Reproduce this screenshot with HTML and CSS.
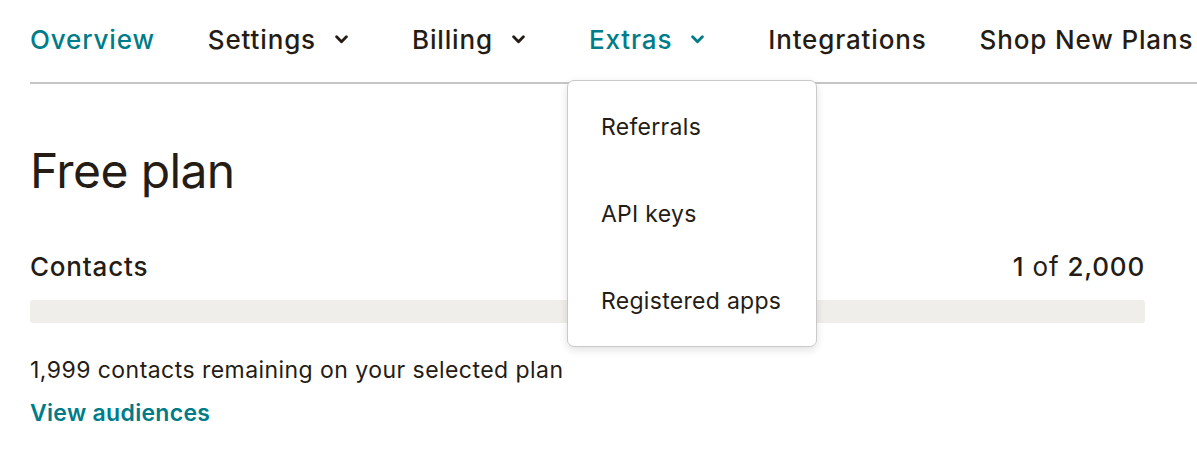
FILE: index.html
```html
<!DOCTYPE html>
<html>
<head>
<meta charset="utf-8">
<link rel="stylesheet" href="styles.css">
</head>
<body>
<div class="page">
  <nav class="tabs">
    <a class="tab active">Overview</a>
    <a class="tab">Settings <svg class="chev" viewBox="0 0 12 8"><path d="M1.5 1.5 L6 6 L10.5 1.5" /></svg></a>
    <a class="tab">Billing <svg class="chev" viewBox="0 0 12 8"><path d="M1.5 1.5 L6 6 L10.5 1.5" /></svg></a>
    <div class="tab-wrap">
      <a class="tab active">Extras <svg class="chev" viewBox="0 0 12 8"><path d="M1.5 1.5 L6 6 L10.5 1.5" /></svg></a>
      <div class="menu">
        <a class="menu-item">Referrals</a>
        <a class="menu-item">API keys</a>
        <a class="menu-item">Registered apps</a>
      </div>
    </div>
    <a class="tab">Integrations</a>
    <a class="tab">Shop New Plans</a>
  </nav>
  <main class="content">
    <h1 class="title">Free plan</h1>
    <div class="row">
      <span class="label">Contacts</span>
      <span class="count"><b>1</b> of <b>2,000</b></span>
    </div>
    <div class="bar"></div>
    <p class="remaining">1,999 contacts remaining on your selected plan</p>
    <a class="link">View audiences</a>
  </main>
</div>
</body>
</html>
```

FILE: styles.css
```css
* { box-sizing: border-box; }
html, body { margin: 0; padding: 0; background: #fff; }
body {
  font-family: "Inter", "Liberation Sans", sans-serif;
  color: #241c15;
}
.page { padding-left: 30px; }
.tabs {
  display: flex;
  align-items: center;
  gap: 53px;
  height: 84px;
  padding-bottom: 3px;
  border-bottom: 2px solid #c6c6c6;
  white-space: nowrap;
}
.tab {
  display: flex;
  align-items: center;
  font-size: 26px;
  font-weight: 500;
  color: #241c15;
  letter-spacing: 0.85px;
}
.tab.active { color: #007c89; }
.chev {
  width: 13px;
  height: 9px;
  margin-left: 19px;
  margin-right: 11px;
  fill: none;
  stroke: currentColor;
  stroke-width: 2.6;
  stroke-linecap: round;
  stroke-linejoin: round;
}
.tab-wrap {
  position: relative;
  align-self: stretch;
  display: flex;
  align-items: center;
}
.menu {
  position: absolute;
  left: -22px;
  top: 80px;
  width: 250px;
  height: 267px;
  background: #fff;
  border: 1px solid #c9c9c9;
  border-radius: 7px;
  box-shadow: 0 3px 8px rgba(0,0,0,0.12);
  display: flex;
  flex-direction: column;
  padding: 2px 0;
  z-index: 5;
}
.menu-item {
  flex: 1;
  display: flex;
  align-items: center;
  padding-left: 33px;
  font-size: 23px;
  letter-spacing: 0.3px;
  color: #241c15;
}
.content { padding-right: 52px; }
.title {
  margin: 58px 0 0;
  font-size: 48px;
  font-weight: 400;
  line-height: 58px;
  letter-spacing: -0.6px;
}
.row {
  display: flex;
  justify-content: space-between;
  align-items: baseline;
  margin-top: 52px;
  line-height: 30px;
}
.label { font-size: 26px; font-weight: 500; letter-spacing: 0.8px; }
.count { font-size: 26px; letter-spacing: 0.8px; }
.count b { font-weight: 500; }
.bar {
  margin-top: 18px;
  height: 23px;
  background: #efeeea;
  border-radius: 3px;
}
.remaining {
  margin: 33px 0 0;
  font-size: 23px;
  line-height: 28px;
  letter-spacing: 0.45px;
}
.link {
  display: block;
  margin-top: 15px;
  font-size: 23px;
  font-weight: 600;
  color: #007c89;
  line-height: 28px;
  letter-spacing: 0.3px;
}
```
